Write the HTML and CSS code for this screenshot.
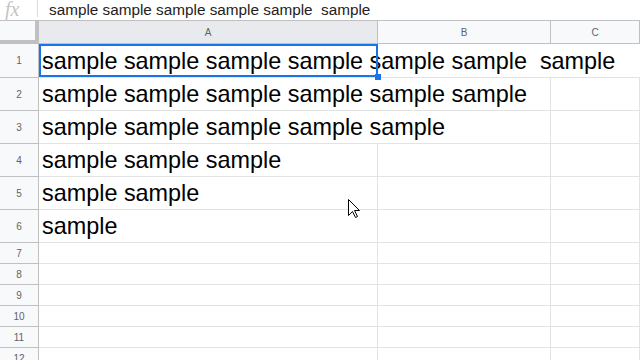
FILE: index.html
```html
<!DOCTYPE html>
<html>
<head>
<meta charset="utf-8">
<link rel="stylesheet" href="styles.css">
</head>
<body>
<div class="page">
  <div class="fbar">
    <div class="fx">fx</div>
    <div class="fdiv"></div>
    <div class="ftext">sample sample sample sample sample&nbsp; sample</div>
  </div>
  <div class="sheet">
    <div class="corner"></div>
    <div class="colh sel">A</div>
    <div class="colh">B</div>
    <div class="colh">C</div>

    <div class="rowh">1</div>
    <div class="cell txt span3">sample sample sample sample sample sample&nbsp; sample</div>

    <div class="rowh">2</div>
    <div class="cell txt span2">sample sample sample sample sample sample</div>
    <div class="cell"></div>

    <div class="rowh">3</div>
    <div class="cell txt span2">sample sample sample sample sample</div>
    <div class="cell"></div>

    <div class="rowh">4</div>
    <div class="cell txt">sample sample sample</div>
    <div class="cell"></div>
    <div class="cell"></div>

    <div class="rowh">5</div>
    <div class="cell txt">sample sample</div>
    <div class="cell"></div>
    <div class="cell"></div>

    <div class="rowh">6</div>
    <div class="cell txt">sample</div>
    <div class="cell"></div>
    <div class="cell"></div>

    <div class="rowh">7</div><div class="cell"></div><div class="cell"></div><div class="cell"></div>
    <div class="rowh">8</div><div class="cell"></div><div class="cell"></div><div class="cell"></div>
    <div class="rowh">9</div><div class="cell"></div><div class="cell"></div><div class="cell"></div>
    <div class="rowh">10</div><div class="cell"></div><div class="cell"></div><div class="cell"></div>
    <div class="rowh">11</div><div class="cell"></div><div class="cell"></div><div class="cell"></div>
    <div class="rowh">12</div><div class="cell"></div><div class="cell"></div><div class="cell"></div>
  </div>
  <div class="selection"></div>
  <div class="handle"></div>
  <svg class="cursor" width="13" height="20" viewBox="0 0 13 20">
    <path d="M0.5 0.5 L0.5 16.5 L4.5 12.5 L7.5 18.5 L9.5 17.5 L6.5 11.5 L11.5 11.5 Z" fill="#fff" stroke="#000" stroke-width="1" stroke-linejoin="miter"/>
  </svg>
</div>
</body>
</html>
```

FILE: styles.css
```css
html, body {
  margin: 0;
  padding: 0;
  background: #fff;
  overflow: hidden;
}
.page {
  position: relative;
  width: 640px;
  height: 360px;
  overflow: hidden;
  font-family: "Liberation Sans", Arial, sans-serif;
}
.fbar {
  display: flex;
  align-items: center;
  height: 20px;
  border-bottom: 1px solid #c0c0c0;
  box-sizing: content-box;
}
.fx {
  width: 37px;
  height: 20px;
  box-sizing: border-box;
  align-self: flex-start;
  padding-left: 5px;
  font-family: "Liberation Serif", serif;
  font-style: italic;
  font-size: 20px;
  line-height: 18px;
  color: #c4c4c4;
}
.fdiv {
  width: 1px;
  height: 17px;
  align-self: flex-start;
  background: #dadce0;
}
.ftext {
  padding-left: 11px;
  font-size: 15.3px;
  line-height: 18px;
  color: #222;
  white-space: nowrap;
}
.sheet {
  display: grid;
  grid-template-columns: 39px 339px 173px 1fr;
  grid-template-rows: 23px 34px 33px 33px 33px 33px 33px repeat(6, 21px);
}
.sheet > div {
  box-sizing: border-box;
}
.corner {
  background: #f8f9fa;
  border-right: 4px solid #c0c0c0;
  border-bottom: 4px solid #c0c0c0;
}
.colh {
  background: #f8f9fa;
  border-right: 1px solid #c0c0c0;
  border-bottom: 1px solid #c0c0c0;
  display: flex;
  align-items: center;
  justify-content: center;
  font-size: 10px;
  color: #5f6368;
}
.colh.sel {
  background: #e8eaed;
}
.rowh {
  background: #f8f9fa;
  border-right: 1px solid #c0c0c0;
  border-bottom: 1px solid #c0c0c0;
  display: flex;
  align-items: center;
  justify-content: center;
  font-size: 10px;
  color: #5f6368;
}
.cell {
  border-right: 1px solid #e2e3e3;
  border-bottom: 1px solid #e2e3e3;
}
.txt {
  display: flex;
  align-items: flex-end;
  padding: 0 3px 2px 3px;
  font-size: 23.4px;
  line-height: 27px;
  color: #000;
  white-space: nowrap;
  overflow: hidden;
}
.span2 {
  grid-column: span 2;
}
.span3 {
  grid-column: span 3;
  border-right: none;
}
.selection {
  position: absolute;
  left: 39px;
  top: 44px;
  width: 339px;
  height: 33px;
  box-sizing: border-box;
  border: 2px solid #1a73e8;
}
.handle {
  position: absolute;
  left: 375px;
  top: 74px;
  width: 6px;
  height: 6px;
  background: #1a73e8;
}
.cursor {
  position: absolute;
  left: 348px;
  top: 199px;
}
```
